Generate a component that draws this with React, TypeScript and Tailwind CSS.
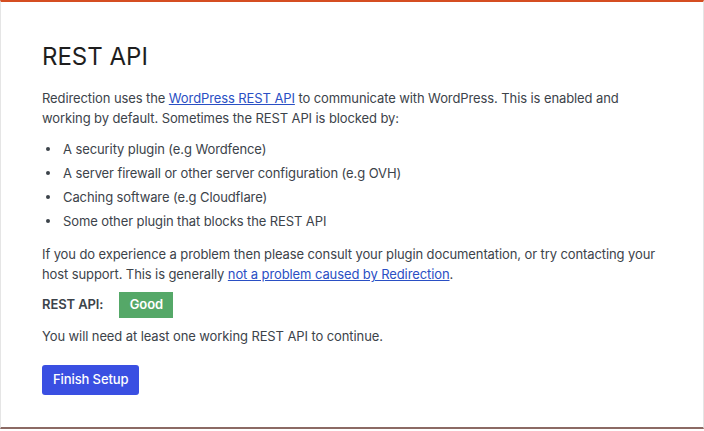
const FONT = { fontFamily: 'Inter, "Noto Sans", sans-serif' };

const BLOCKERS = [
  'A security plugin (e.g Wordfence)',
  'A server firewall or other server configuration (e.g OVH)',
  'Caching software (e.g Cloudflare)',
  'Some other plugin that blocks the REST API',
];

export default function App() {
  return (
    <div className="h-[431px] w-[704px] bg-white" style={FONT}>
      <div className="flex h-[429px] flex-col border-t-2 border-b-2 border-x border-t-[#d54e21] border-b-[#8c6a64] border-x-[#e5e5e5] px-[41px] pt-[40px] text-[13px] tracking-[-0.1px] text-[#3c434a]">
        <h1 className="text-[24px] font-normal leading-[30px] tracking-normal text-[#1e1e1e]">REST API</h1>

        <p className="mt-[16px] leading-[20px]">
          Redirection uses the{' '}
          <a href="#" className="text-[#2a4fc4] underline">WordPress REST API</a> to communicate with
          WordPress. This is enabled and working by default. Sometimes the REST API is blocked by:
        </p>

        <ul className="mt-[11px] flex flex-col gap-[4px] pl-[4px]">
          {BLOCKERS.map((b) => (
            <li key={b} className="flex items-center gap-[13px] leading-[20px]">
              <span className="h-[4px] w-[4px] rounded-full bg-[#3c434a]" />
              {b}
            </li>
          ))}
        </ul>

        <p className="mt-[13px] w-[620px] leading-[20px]">
          If you do experience a problem then please consult your plugin documentation, or try contacting
          your host support. This is generally{' '}
          <a href="#" className="text-[#2a4fc4] underline">not a problem caused by Redirection</a>.
        </p>

        <div className="mt-[8px] flex items-center gap-[16px]">
          <span className="font-semibold">REST API:</span>
          <span className="flex h-[26px] w-[54px] items-center justify-center bg-[#55a868] font-semibold text-white">
            Good
          </span>
        </div>

        <p className="mt-[8px] leading-[20px]">You will need at least one working REST API to continue.</p>

        <div className="mt-[19px]">
          <button
            type="button"
            className="h-[30px] rounded-[3px] bg-[#3a4fe2] px-[11px] font-medium text-white"
          >
            Finish Setup
          </button>
        </div>
      </div>
    </div>
  );
}
